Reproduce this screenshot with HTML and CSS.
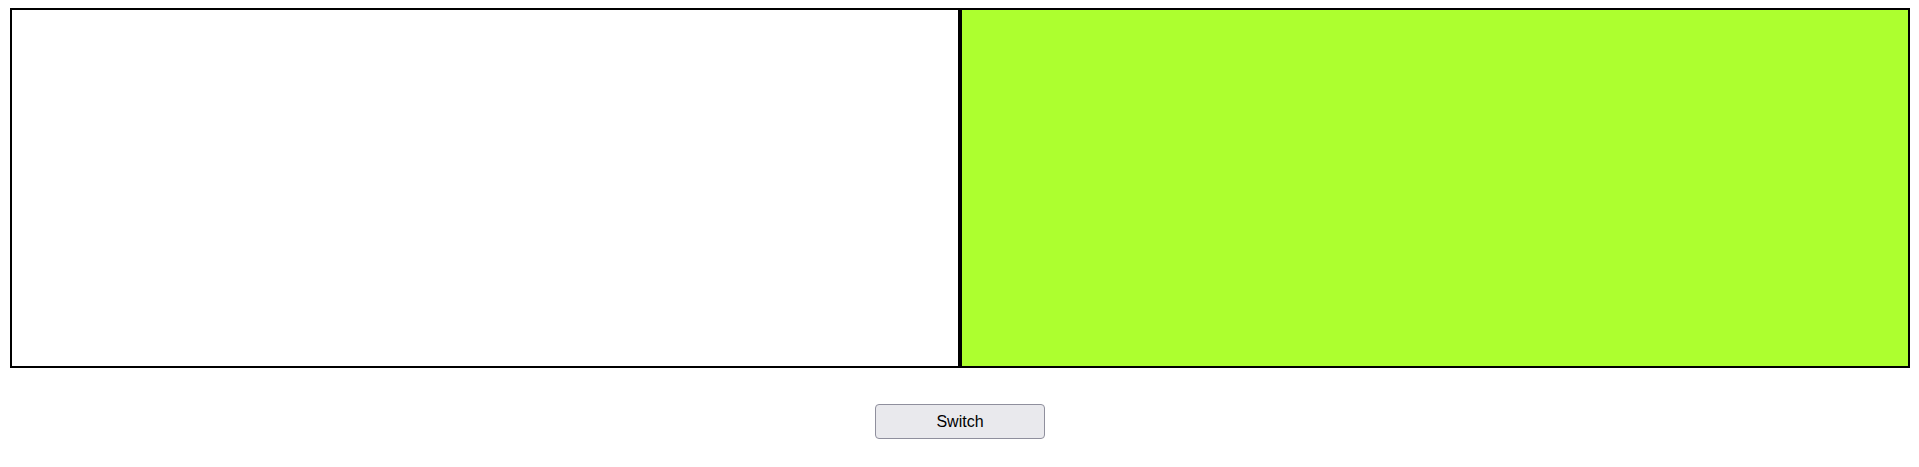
FILE: index.html
```html
<!DOCTYPE html>
<html>
<head>
<meta charset="utf-8">
<link rel="stylesheet" href="styles.css">
</head>
<body>
<div class="panels">
  <div class="panel panel-white"></div>
  <div class="panel panel-green"></div>
</div>
<div class="actions">
  <button class="switch-btn">Switch</button>
</div>
</body>
</html>
```
FILE: styles.css
```css
html, body {
  margin: 0;
  padding: 0;
  background: #fff;
}
body {
  font-family: "Liberation Sans", Arial, sans-serif;
}
.panels {
  display: flex;
  margin: 8px 0 0 10px;
  width: 1900px;
}
.panel {
  box-sizing: border-box;
  width: 950px;
  height: 360px;
  border: 2px solid #000;
}
.panel-white {
  background: #fff;
}
.panel-green {
  background: #adff2f;
}
.actions {
  display: flex;
  justify-content: center;
  margin-top: 36px;
  padding-left: 1px;
}
.switch-btn {
  box-sizing: border-box;
  width: 170px;
  height: 35px;
  background: #e9e9ed;
  border: 1px solid #8f8f9d;
  border-radius: 4px;
  font-family: "Liberation Sans", Arial, sans-serif;
  font-size: 16px;
  color: #000;
  padding: 0;
}
```
